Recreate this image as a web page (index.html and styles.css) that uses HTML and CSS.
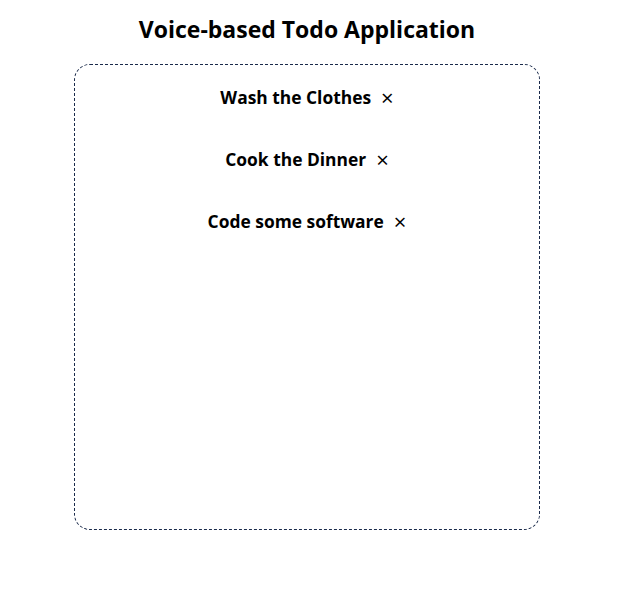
FILE: index.html
```html
<!DOCTYPE html>
<html>
<head>
<meta charset="utf-8">
<link rel="stylesheet" href="styles.css">
</head>
<body>
<div class="app">
  <h1 class="title">Voice-based Todo Application</h1>
  <div class="board">
    <div class="item"><span class="text">Wash the Clothes</span><span class="close">×</span></div>
    <div class="item"><span class="text">Cook the Dinner</span><span class="close">×</span></div>
    <div class="item"><span class="text">Code some software</span><span class="close">×</span></div>
  </div>
</div>
</body>
</html>
```
FILE: styles.css
```css
body {
  margin: 8px;
  font-family: "Open Sans", sans-serif;
  color: #000;
  background: #fff;
}
.app {
  width: 598px;
  display: flex;
  flex-direction: column;
  align-items: center;
}
.title {
  margin: 6px 0 20px;
  font-size: 23px;
  font-weight: 700;
  line-height: 30px;
}
.board {
  width: 464px;
  border: 1px dashed #1a2a4a;
  border-radius: 16px;
  display: flex;
  flex-direction: column;
  align-items: center;
  padding-top: 20px;
  box-sizing: content-box;
  height: 444px;
  gap: 38px;
}
.item {
  display: flex;
  align-items: center;
  gap: 10px;
  font-size: 17.4px;
  line-height: 24px;
}
.text {
  font-weight: 700;
}
.close {
  font-weight: 400;
  font-size: 22px;
  line-height: 24px;
}
```
